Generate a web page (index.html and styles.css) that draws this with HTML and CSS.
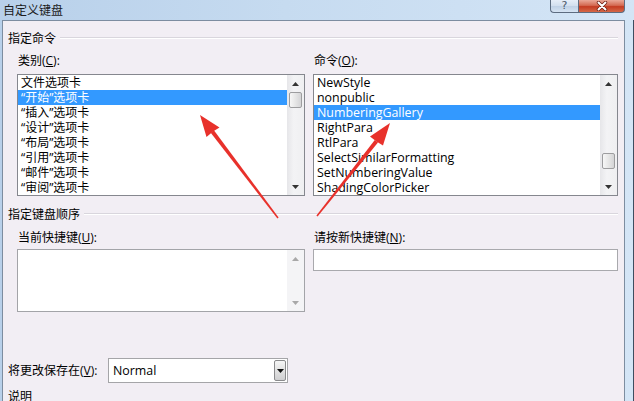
FILE: index.html
```html
<!DOCTYPE html>
<html lang="zh-CN">
<head>
<meta charset="utf-8">
<title>自定义键盘</title>
<link rel="stylesheet" href="styles.css">
</head>
<body>
<div class="window">
  <div class="caption">
    <span class="title">自定义键盘</span>
    <div class="capbtns">
      <div class="cbtn help"><span>?</span></div>
      <div class="cbtn close"><svg width="14" height="10" viewBox="0 0 14 10"><path d="M3.5 1.5 L10.5 8.5 M10.5 1.5 L3.5 8.5" stroke="#6b1c10" stroke-width="3.4" stroke-linecap="round"/><path d="M3.5 1.5 L10.5 8.5 M10.5 1.5 L3.5 8.5" stroke="#fff" stroke-width="2" stroke-linecap="round"/></svg></div>
    </div>
  </div>
  <div class="frame">
    <div class="client">
      <div class="group"><span class="gtitle">指定命令</span><span class="rule"></span></div>
      <div class="cols cols-top">
        <div class="col col-left">
          <div class="lbl">类别(<u>C</u>):</div>
          <div class="listbox">
            <ul class="items">
              <li>文件选项卡</li>
              <li class="sel">“开始”选项卡</li>
              <li>“插入”选项卡</li>
              <li>“设计”选项卡</li>
              <li>“布局”选项卡</li>
              <li>“引用”选项卡</li>
              <li>“邮件”选项卡</li>
              <li>“审阅”选项卡</li>
            </ul>
            <div class="sbar">
              <div class="sbtn"><svg width="7" height="4" viewBox="0 0 7 4"><path d="M0 4 L3.5 0 L7 4 Z" fill="#333"/></svg></div>
              <div class="strack"><div class="thumb"></div></div>
              <div class="sbtn"><svg width="7" height="4" viewBox="0 0 7 4"><path d="M0 0 L3.5 4 L7 0 Z" fill="#333"/></svg></div>
            </div>
          </div>
        </div>
        <div class="col col-right">
          <div class="lbl">命令(<u>O</u>):</div>
          <div class="listbox">
            <ul class="items latin">
              <li>NewStyle</li>
              <li>nonpublic</li>
              <li class="sel">NumberingGallery</li>
              <li>RightPara</li>
              <li>RtlPara</li>
              <li>SelectSimilarFormatting</li>
              <li>SetNumberingValue</li>
              <li>ShadingColorPicker</li>
            </ul>
            <div class="sbar">
              <div class="sbtn"><svg width="7" height="4" viewBox="0 0 7 4"><path d="M0 4 L3.5 0 L7 4 Z" fill="#333"/></svg></div>
              <div class="strack"><div class="thumb thumb-low"></div></div>
              <div class="sbtn"><svg width="7" height="4" viewBox="0 0 7 4"><path d="M0 0 L3.5 4 L7 0 Z" fill="#333"/></svg></div>
            </div>
          </div>
        </div>
      </div>

      <div class="group group-2"><span class="gtitle">指定键盘顺序</span><span class="rule"></span></div>
      <div class="cols cols-bottom">
        <div class="col col-left">
          <div class="lbl lbl-tight">当前快捷键(<u>U</u>):</div>
          <div class="memo">
            <div class="memo-body"></div>
            <div class="sbar sbar-off">
              <div class="sbtn"><svg width="7" height="4" viewBox="0 0 7 4"><path d="M0 4 L3.5 0 L7 4 Z" fill="#a8a8a8"/></svg></div>
              <div class="strack"></div>
              <div class="sbtn"><svg width="7" height="4" viewBox="0 0 7 4"><path d="M0 0 L3.5 4 L7 0 Z" fill="#a8a8a8"/></svg></div>
            </div>
          </div>
        </div>
        <div class="col col-right">
          <div class="lbl lbl-tight">请按新快捷键(<u>N</u>):</div>
          <div class="textbox"></div>
        </div>
      </div>

      <div class="saverow">
        <span class="savelbl">将更改保存在(<u>V</u>):</span>
        <div class="combo">
          <span class="combo-val">Normal</span>
          <span class="ddbtn"><svg width="7" height="4" viewBox="0 0 7 4"><path d="M0 0 L3.5 4 L7 0 Z" fill="#111"/></svg></span>
        </div>
      </div>
      <div class="desc">说明</div>
    </div>
  </div>

  <svg class="arrows" width="634" height="401" viewBox="0 0 634 401">
    <polygon fill="#e8312b" points="278.6,217.5 277.4,218.5 210.7,132.7 213.9,130.3"/>
    <polygon fill="#e8312b" points="200,115 219.5,127.5 213,131.5 206.5,137"/>
    <polygon fill="#e8312b" points="317.6,216.5 316.4,215.5 374.8,140.1 378,142.5"/>
    <polygon fill="#e8312b" points="390,123 383,145.5 376.5,141.5 370,136.5"/>
  </svg>
</div>
</body>
</html>
```

FILE: styles.css
```css
* {
  box-sizing: border-box;
  margin: 0;
  padding: 0;
}

html,
body {
  width: 634px;
  height: 401px;
  overflow: hidden;
}

body {
  font-family: "Open Sans", "Noto Sans CJK SC", sans-serif;
  font-size: 12px;
  color: #000;
  background: #c9ddf1;
}

.window {
  position: relative;
  width: 634px;
  height: 401px;
  display: flex;
  flex-direction: column;
  background: linear-gradient(90deg, #b8d0ea 0%, #c6dbf0 45%, #d4e5f6 100%);
}

/* ---------- caption ---------- */
.caption {
  height: 20px;
  flex: none;
  display: flex;
  align-items: flex-start;
  justify-content: space-between;
  padding-left: 3px;
  padding-right: 9px;
}

.title {
  line-height: 20px;
  font-family: "Noto Sans CJK SC", sans-serif;
  font-size: 12px;
  color: #1b1b1b;
}

.capbtns {
  display: flex;
}

.cbtn {
  height: 13px;
  border: 1px solid #5d6c80;
  border-top: none;
  display: flex;
  align-items: center;
  justify-content: center;
}

.help {
  width: 28px;
  border-right: none;
  border-radius: 0 0 0 4px;
  background: linear-gradient(#e6eef8, #d2dfee 50%, #bfd0e5 51%, #d6e4f3);
}

.help span {
  font-family: "DejaVu Sans", sans-serif;
  font-size: 11px;
  line-height: 12px;
  color: #4a586a;
}

.close {
  width: 47px;
  border-radius: 0 0 4px 0;
  background: linear-gradient(#eaa898, #d46a52 45%, #c43c22 55%, #d56848);
}

/* ---------- frame / client ---------- */
.frame {
  flex: 1;
  display: flex;
  padding: 0 8px 0 2px;
  border-right: 1px solid #3d4d60;
}

.client {
  flex: 1;
  background: #f2eef4;
  border: 1px solid #7d8da0;
  border-bottom: none;
  padding: 9px 6px 0 5px;
}

.group {
  display: flex;
  align-items: center;
  height: 16px;
  line-height: 16px;
}

.gtitle {
  font-family: "Noto Sans CJK SC", sans-serif;
  white-space: nowrap;
}

.rule {
  flex: 1;
  height: 2px;
  margin-left: 4px;
  border-top: 1px solid #d9d6dd;
  border-bottom: 1px solid #ffffff;
}

.group-2 {
  margin-top: 10px;
}

.cols {
  display: flex;
  gap: 8px;
  padding-left: 9px;
}

.cols-top {
  margin-top: 7px;
}

.cols-bottom {
  margin-top: 8px;
}

.col-left {
  width: 288px;
  flex: none;
}

.col-right {
  flex: 1;
  min-width: 0;
}

.lbl {
  line-height: 16px;
  height: 16px;
  margin-bottom: 5px;
  padding-left: 1px;
  white-space: nowrap;
}

.lbl-tight {
  margin-bottom: 3px;
}

/* ---------- list boxes ---------- */
.listbox {
  height: 122px;
  border: 1px solid #85878e;
  background: #fff;
  display: flex;
}

.items {
  flex: 1;
  list-style: none;
  padding-top: 0;
  min-width: 0;
}

.items li {
  height: 15px;
  line-height: 15px;
  padding-left: 3px;
  white-space: nowrap;
  overflow: hidden;
}

.items.latin li {
  font-size: 12.4px;
}

.items li.sel {
  background: #3399ff;
  color: #fff;
}

.sbar {
  width: 17px;
  flex: none;
  display: flex;
  flex-direction: column;
  background: linear-gradient(90deg, #e6e6e9, #f3f3f5 40%, #efeff1);
}

.sbtn {
  height: 17px;
  flex: none;
  display: flex;
  align-items: center;
  justify-content: center;
}

.strack {
  flex: 1;
}

.thumb {
  height: 16px;
  margin: 0 2px 0 2px;
  border: 1px solid #9d9d9f;
  border-radius: 2px;
  background: linear-gradient(90deg, #f7f7f7, #e6e6e6 50%, #d4d4d6);
}

.thumb-low {
  margin-top: 61px;
}

/* ---------- edit boxes ---------- */
.memo {
  height: 63px;
  border: 1px solid #a3a4a8;
  background: #fff;
  display: flex;
}

.memo-body {
  flex: 1;
}

.sbar-off {
  background: #f4f4f6;
}

.textbox {
  height: 22px;
  border: 1px solid #a9a9ad;
  background: #fff;
}

/* ---------- save row ---------- */
.saverow {
  margin-top: 46px;
  height: 25px;
  display: flex;
  align-items: center;
}

.savelbl {
  width: 100px;
  flex: none;
  white-space: nowrap;
  line-height: 16px;
}

.combo {
  width: 180px;
  height: 25px;
  border: 1px solid #a5a5a8;
  background: #fff;
  display: flex;
  align-items: center;
  justify-content: space-between;
  padding: 0 1px 0 4px;
}

.combo-val {
  font-size: 12.4px;
}

.ddbtn {
  width: 12px;
  height: 21px;
  border: 1px solid #8a8a8c;
  border-radius: 2px;
  background: linear-gradient(#f6f6f6, #e2e2e2 50%, #cfcfd1);
  display: flex;
  align-items: center;
  justify-content: center;
}

.desc {
  margin-top: 6px;
  line-height: 16px;
}

/* ---------- annotation arrows ---------- */
.arrows {
  position: absolute;
  left: 0;
  top: 0;
  pointer-events: none;
}
```
